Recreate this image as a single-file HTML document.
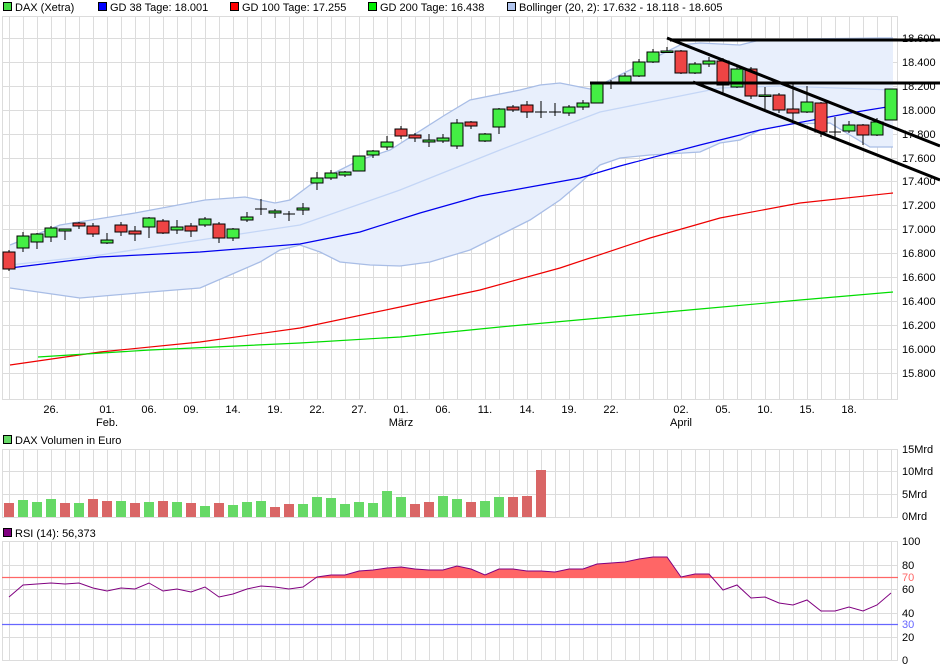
<!DOCTYPE html>
<html><head><meta charset="utf-8"><style>
html,body{margin:0;padding:0;background:#fff;width:940px;height:670px;overflow:hidden}
svg{display:block;font-family:"Liberation Sans",sans-serif;font-size:11px}
</style></head><body>
<svg width="940" height="670" viewBox="0 0 940 670" xmlns="http://www.w3.org/2000/svg">
<defs>
<pattern id="vg" x="9" y="0" width="14" height="10" patternUnits="userSpaceOnUse"><line x1="0.5" y1="0" x2="0.5" y2="10" stroke="#dcdcdc" stroke-width="1"/></pattern>
<clipPath id="above70"><rect x="0" y="530" width="900" height="47"/></clipPath>
</defs>
<!-- legend -->
<g>
<rect x="3.5" y="2.5" width="8" height="8" fill="#44dd44" stroke="#000"/><text x="15" y="11">DAX (Xetra)</text>
<rect x="98.5" y="2.5" width="8" height="8" fill="#0000ff" stroke="#000"/><text x="110" y="11">GD 38 Tage: 18.001</text>
<rect x="230.5" y="2.5" width="8" height="8" fill="#ff0000" stroke="#000"/><text x="242" y="11">GD 100 Tage: 17.255</text>
<rect x="368.5" y="2.5" width="8" height="8" fill="#00ee00" stroke="#000"/><text x="380" y="11">GD 200 Tage: 16.438</text>
<rect x="507.5" y="2.5" width="8" height="8" fill="#b0c4ee" stroke="#000"/><text x="519" y="11">Bollinger (20, 2): 17.632 - 18.118 - 18.605</text>
</g>
<!-- main panel grid -->
<rect x="2" y="16" width="896" height="384" fill="url(#vg)"/>
<g stroke="#dcdcdc" stroke-width="1">
<line x1="2" y1="16.5" x2="898" y2="16.5"/>
<line x1="2" y1="38.5" x2="898" y2="38.5"/><line x1="2" y1="62.5" x2="898" y2="62.5"/><line x1="2" y1="86.5" x2="898" y2="86.5"/><line x1="2" y1="110.5" x2="898" y2="110.5"/><line x1="2" y1="134.5" x2="898" y2="134.5"/><line x1="2" y1="158.5" x2="898" y2="158.5"/><line x1="2" y1="181.5" x2="898" y2="181.5"/><line x1="2" y1="205.5" x2="898" y2="205.5"/><line x1="2" y1="229.5" x2="898" y2="229.5"/><line x1="2" y1="253.5" x2="898" y2="253.5"/><line x1="2" y1="277.5" x2="898" y2="277.5"/><line x1="2" y1="301.5" x2="898" y2="301.5"/><line x1="2" y1="325.5" x2="898" y2="325.5"/><line x1="2" y1="349.5" x2="898" y2="349.5"/><line x1="2" y1="373.5" x2="898" y2="373.5"/>
<line x1="2" y1="399.5" x2="898" y2="399.5"/>
<line x1="2.5" y1="16" x2="2.5" y2="400"/><line x1="897.5" y1="16" x2="897.5" y2="400"/>
</g>
<!-- bollinger -->
<path d="M10,245 L60,225 L135,213 L205,200 L245,197 L275,203 L290,200 L310,185 L330,175 L360,160 L390,150 L445,115 L470,100 L520,90 L540,85 L560,83 L580,87 L590,89 L600,85 L620,75 L650,60 L680,45 L700,43 L740,45 L760,40 L800,39 L880,38 L893,38 L893,147 L870,147 L830,123 L790,124 L760,130 L740,140 L720,143 L700,152 L650,155 L620,158 L600,165 L580,183 L560,200 L530,220 L500,235 L470,250 L430,262 L400,266 L370,265 L340,262 L320,252 L300,245 L280,250 L260,262 L230,275 L200,288 L150,292 L80,298 L10,288 Z" fill="#e8effc" stroke="none"/>
<path d="M10,245 L60,225 L135,213 L205,200 L245,197 L275,203 L290,200 L310,185 L330,175 L360,160 L390,150 L445,115 L470,100 L520,90 L540,85 L560,83 L580,87 L590,89 L600,85 L620,75 L650,60 L680,45 L700,43 L740,45 L760,40 L800,39 L880,38 L893,38" fill="none" stroke="#a8bde6" stroke-width="1.3"/>
<path d="M10,288 L80,298 L150,292 L200,288 L230,275 L260,262 L280,250 L300,245 L320,252 L340,262 L370,265 L400,266 L430,262 L470,250 L500,235 L530,220 L560,200 L580,183 L600,165 L620,158 L650,155 L700,152 L720,143 L740,140 L760,130 L790,124 L830,123 L870,147 L893,147" fill="none" stroke="#a8bde6" stroke-width="1.3"/>
<path d="M10,265 L100,255 L200,240 L300,225 L400,190 L500,150 L600,112 L660,100 L720,88 L780,86 L893,90" fill="none" stroke="#c4d6f6" stroke-width="1.3"/>
<!-- moving averages -->
<path d="M10,268 L100,257 L200,252 L300,244 L360,232 L420,213 L480,196 L530,187 L580,178 L620,166 L700,145 L760,130 L850,113 L893,106" fill="none" stroke="#0000ee" stroke-width="1.2"/>
<path d="M10,365 L100,352 L200,342 L300,328 L400,307 L480,290 L560,268 L650,238 L720,218 L800,203 L893,193" fill="none" stroke="#ee0000" stroke-width="1.2"/>
<path d="M38,357 L150,350 L300,343 L400,337 L500,327 L600,318 L700,309 L800,300 L893,292" fill="none" stroke="#00dd00" stroke-width="1.2"/>
<!-- candles -->
<g stroke="#000" stroke-width="1">
<line x1="9" y1="250" x2="9" y2="271"/><rect x="3" y="252" width="12" height="17" fill="#ee4444"/>
<line x1="23" y1="232" x2="23" y2="252"/><rect x="17" y="236" width="12" height="12" fill="#44ee44"/>
<line x1="37" y1="233" x2="37" y2="249"/><rect x="31" y="234" width="12" height="8" fill="#44ee44"/>
<line x1="51" y1="226" x2="51" y2="242"/><rect x="45" y="228" width="12" height="9" fill="#44ee44"/>
<line x1="65" y1="229" x2="65" y2="240"/><rect x="59" y="229" width="12" height="2" fill="#44ee44"/>
<line x1="79" y1="222" x2="79" y2="229"/><rect x="73" y="223" width="12" height="3" fill="#ee4444"/>
<line x1="93" y1="223" x2="93" y2="237"/><rect x="87" y="226" width="12" height="8" fill="#ee4444"/>
<line x1="107" y1="233" x2="107" y2="244"/><rect x="101" y="240" width="12" height="3" fill="#44ee44"/>
<line x1="121" y1="222" x2="121" y2="236"/><rect x="115" y="225" width="12" height="7" fill="#ee4444"/>
<line x1="135" y1="226" x2="135" y2="241"/><rect x="129" y="231" width="12" height="3" fill="#ee4444"/>
<line x1="149" y1="217" x2="149" y2="238"/><rect x="143" y="218" width="12" height="9" fill="#44ee44"/>
<line x1="163" y1="219" x2="163" y2="234"/><rect x="157" y="221" width="12" height="12" fill="#ee4444"/>
<line x1="177" y1="220" x2="177" y2="234"/><rect x="171" y="227" width="12" height="3" fill="#44ee44"/>
<line x1="191" y1="223" x2="191" y2="237"/><rect x="185" y="226" width="12" height="5" fill="#ee4444"/>
<line x1="205" y1="217" x2="205" y2="227"/><rect x="199" y="219" width="12" height="6" fill="#44ee44"/>
<line x1="219" y1="222" x2="219" y2="243"/><rect x="213" y="224" width="12" height="14" fill="#ee4444"/>
<line x1="233" y1="228" x2="233" y2="241"/><rect x="227" y="229" width="12" height="9" fill="#44ee44"/>
<line x1="247" y1="212" x2="247" y2="222"/><rect x="241" y="217" width="12" height="3" fill="#44ee44"/>
<line x1="261" y1="199" x2="261" y2="215"/><line x1="255" y1="209" x2="267" y2="209"/>
<line x1="275" y1="209" x2="275" y2="218"/><rect x="269" y="211" width="12" height="2" fill="#44ee44"/>
<line x1="289" y1="211" x2="289" y2="221"/><line x1="283" y1="214" x2="295" y2="214"/>
<line x1="303" y1="203" x2="303" y2="215"/><rect x="297" y="208" width="12" height="2" fill="#44ee44"/>
<line x1="317" y1="172" x2="317" y2="190"/><rect x="311" y="178" width="12" height="5" fill="#44ee44"/>
<line x1="331" y1="170" x2="331" y2="180"/><rect x="325" y="173" width="12" height="5" fill="#44ee44"/>
<line x1="345" y1="171" x2="345" y2="177"/><rect x="339" y="172" width="12" height="3" fill="#44ee44"/>
<line x1="359" y1="156" x2="359" y2="171"/><rect x="353" y="156" width="12" height="15" fill="#44ee44"/>
<line x1="373" y1="150" x2="373" y2="158"/><rect x="367" y="151" width="12" height="4" fill="#44ee44"/>
<line x1="387" y1="136" x2="387" y2="150"/><rect x="381" y="142" width="12" height="5" fill="#44ee44"/>
<line x1="401" y1="126" x2="401" y2="139"/><rect x="395" y="129" width="12" height="7" fill="#ee4444"/>
<line x1="415" y1="133" x2="415" y2="142"/><rect x="409" y="135" width="12" height="3" fill="#ee4444"/>
<line x1="429" y1="134" x2="429" y2="147"/><rect x="423" y="140" width="12" height="2" fill="#44ee44"/>
<line x1="443" y1="134" x2="443" y2="143"/><rect x="437" y="138" width="12" height="3" fill="#44ee44"/>
<line x1="457" y1="119" x2="457" y2="149"/><rect x="451" y="123" width="12" height="23" fill="#44ee44"/>
<line x1="471" y1="121" x2="471" y2="129"/><rect x="465" y="122" width="12" height="4" fill="#ee4444"/>
<line x1="485" y1="133" x2="485" y2="142"/><rect x="479" y="134" width="12" height="7" fill="#44ee44"/>
<line x1="499" y1="108" x2="499" y2="134"/><rect x="493" y="109" width="12" height="18" fill="#44ee44"/>
<line x1="513" y1="105" x2="513" y2="112"/><rect x="507" y="107" width="12" height="3" fill="#ee4444"/>
<line x1="527" y1="101" x2="527" y2="118"/><rect x="521" y="105" width="12" height="7" fill="#ee4444"/>
<line x1="541" y1="101" x2="541" y2="118"/><line x1="535" y1="112" x2="547" y2="112"/>
<line x1="555" y1="103" x2="555" y2="116"/><line x1="549" y1="112" x2="561" y2="112"/>
<line x1="569" y1="105" x2="569" y2="116"/><rect x="563" y="107" width="12" height="6" fill="#44ee44"/>
<line x1="583" y1="100" x2="583" y2="110"/><rect x="577" y="103" width="12" height="4" fill="#44ee44"/>
<line x1="597" y1="83" x2="597" y2="103"/><rect x="591" y="84" width="12" height="19" fill="#44ee44"/>
<line x1="611" y1="80" x2="611" y2="89"/><rect x="605" y="83" width="12" height="1" fill="#44ee44"/>
<line x1="625" y1="73" x2="625" y2="84"/><rect x="619" y="76" width="12" height="7" fill="#44ee44"/>
<line x1="639" y1="59" x2="639" y2="77"/><rect x="633" y="62" width="12" height="14" fill="#44ee44"/>
<line x1="653" y1="49" x2="653" y2="63"/><rect x="647" y="52" width="12" height="10" fill="#44ee44"/>
<line x1="667" y1="47" x2="667" y2="53"/><rect x="661" y="51" width="12" height="1.5" fill="#44ee44"/>
<line x1="681" y1="50" x2="681" y2="74"/><rect x="675" y="51" width="12" height="22" fill="#ee4444"/>
<line x1="695" y1="62" x2="695" y2="74"/><rect x="689" y="64" width="12" height="9" fill="#44ee44"/>
<line x1="709" y1="57" x2="709" y2="67"/><rect x="703" y="61" width="12" height="3" fill="#44ee44"/>
<line x1="723" y1="58" x2="723" y2="93"/><rect x="717" y="61" width="12" height="24" fill="#ee4444"/>
<line x1="737" y1="66" x2="737" y2="88"/><rect x="731" y="69" width="12" height="18" fill="#44ee44"/>
<line x1="751" y1="67" x2="751" y2="99"/><rect x="745" y="69" width="12" height="27" fill="#ee4444"/>
<line x1="765" y1="87" x2="765" y2="109"/><rect x="759" y="95" width="12" height="1.5" fill="#44ee44"/>
<line x1="779" y1="93" x2="779" y2="113"/><rect x="773" y="95" width="12" height="15" fill="#ee4444"/>
<line x1="793" y1="83" x2="793" y2="120"/><rect x="787" y="109" width="12" height="4" fill="#ee4444"/>
<line x1="807" y1="86" x2="807" y2="113"/><rect x="801" y="102" width="12" height="10" fill="#44ee44"/>
<line x1="821" y1="102" x2="821" y2="137"/><rect x="815" y="103" width="12" height="29" fill="#ee4444"/>
<line x1="835" y1="117" x2="835" y2="137"/><line x1="829" y1="132" x2="841" y2="132"/>
<line x1="849" y1="121" x2="849" y2="133"/><rect x="843" y="125" width="12" height="6" fill="#44ee44"/>
<line x1="863" y1="124" x2="863" y2="145"/><rect x="857" y="125" width="12" height="10" fill="#ee4444"/>
<line x1="877" y1="118" x2="877" y2="136"/><rect x="871" y="122" width="12" height="13" fill="#44ee44"/>
<rect x="885" y="89" width="12" height="31" fill="#44ee44"/>
</g>
<!-- trend lines -->
<g stroke="#000" stroke-width="3" stroke-linecap="butt">
<line x1="670" y1="40" x2="940" y2="40"/>
<line x1="590" y1="83" x2="940" y2="83"/>
<line x1="667" y1="38" x2="940" y2="146"/>
<line x1="693" y1="82" x2="940" y2="180"/>
</g>
<!-- y labels -->
<g fill="#000">
<text x="902" y="42">18.600</text><text x="902" y="66">18.400</text><text x="902" y="90">18.200</text><text x="902" y="114">18.000</text><text x="902" y="138">17.800</text><text x="902" y="162">17.600</text><text x="902" y="185">17.400</text><text x="902" y="209">17.200</text><text x="902" y="233">17.000</text><text x="902" y="257">16.800</text><text x="902" y="281">16.600</text><text x="902" y="305">16.400</text><text x="902" y="329">16.200</text><text x="902" y="353">16.000</text><text x="902" y="377">15.800</text>
</g>
<!-- x labels -->
<g text-anchor="middle">
<text x="51" y="413">26.</text><text x="107" y="413">01.</text><text x="149" y="413">06.</text><text x="191" y="413">09.</text><text x="233" y="413">14.</text><text x="275" y="413">19.</text><text x="317" y="413">22.</text><text x="359" y="413">27.</text><text x="401" y="413">01.</text><text x="443" y="413">06.</text><text x="485" y="413">11.</text><text x="527" y="413">14.</text><text x="569" y="413">19.</text><text x="611" y="413">22.</text><text x="681" y="413">02.</text><text x="723" y="413">05.</text><text x="765" y="413">10.</text><text x="807" y="413">15.</text><text x="849" y="413">18.</text>
<text x="107" y="426">Feb.</text><text x="401" y="426">März</text><text x="681" y="426">April</text>
</g>
<!-- volume -->
<rect x="3.5" y="435.5" width="8" height="8" fill="#66d966" stroke="#000"/><text x="15" y="444">DAX Volumen in Euro</text>
<rect x="2" y="449" width="896" height="68" fill="url(#vg)"/>
<g stroke="#dcdcdc"><line x1="2" y1="449.5" x2="898" y2="449.5"/><line x1="2" y1="471.5" x2="898" y2="471.5"/><line x1="2" y1="494.5" x2="898" y2="494.5"/><line x1="2" y1="517.5" x2="898" y2="517.5"/><line x1="2.5" y1="449" x2="2.5" y2="517"/><line x1="897.5" y1="449" x2="897.5" y2="517"/></g>
<g>
<rect x="4" y="503" width="10" height="14" fill="#d96666"/><rect x="18" y="500" width="10" height="17" fill="#66d966"/><rect x="32" y="502" width="10" height="15" fill="#66d966"/><rect x="46" y="499" width="10" height="18" fill="#66d966"/><rect x="60" y="503" width="10" height="14" fill="#d96666"/><rect x="74" y="503" width="10" height="14" fill="#66d966"/><rect x="88" y="499" width="10" height="18" fill="#d96666"/><rect x="102" y="501" width="10" height="16" fill="#d96666"/><rect x="116" y="501" width="10" height="16" fill="#66d966"/><rect x="130" y="503" width="10" height="14" fill="#d96666"/><rect x="144" y="502" width="10" height="15" fill="#66d966"/><rect x="158" y="501" width="10" height="16" fill="#d96666"/><rect x="172" y="502" width="10" height="15" fill="#66d966"/><rect x="186" y="503" width="10" height="14" fill="#d96666"/><rect x="200" y="506" width="10" height="11" fill="#66d966"/><rect x="214" y="503" width="10" height="14" fill="#d96666"/><rect x="228" y="505" width="10" height="12" fill="#66d966"/><rect x="242" y="502" width="10" height="15" fill="#66d966"/><rect x="256" y="501" width="10" height="16" fill="#66d966"/><rect x="270" y="507" width="10" height="10" fill="#d96666"/><rect x="284" y="504" width="10" height="13" fill="#d96666"/><rect x="298" y="504" width="10" height="13" fill="#66d966"/><rect x="312" y="497" width="10" height="20" fill="#66d966"/><rect x="326" y="498" width="10" height="19" fill="#66d966"/><rect x="340" y="504" width="10" height="13" fill="#66d966"/><rect x="354" y="502" width="10" height="15" fill="#66d966"/><rect x="368" y="503" width="10" height="14" fill="#66d966"/><rect x="382" y="491" width="10" height="26" fill="#66d966"/><rect x="396" y="497" width="10" height="20" fill="#66d966"/><rect x="410" y="504" width="10" height="13" fill="#d96666"/><rect x="424" y="502" width="10" height="15" fill="#d96666"/><rect x="438" y="496" width="10" height="21" fill="#66d966"/><rect x="452" y="499" width="10" height="18" fill="#66d966"/><rect x="466" y="502" width="10" height="15" fill="#d96666"/><rect x="480" y="501" width="10" height="16" fill="#66d966"/><rect x="494" y="497" width="10" height="20" fill="#66d966"/><rect x="508" y="497" width="10" height="20" fill="#d96666"/><rect x="522" y="496" width="10" height="21" fill="#d96666"/><rect x="536" y="470" width="10" height="47" fill="#d96666"/>
</g>
<g><text x="902" y="453">15Mrd</text><text x="902" y="475">10Mrd</text><text x="902" y="498">5Mrd</text><text x="902" y="520">0Mrd</text></g>
<!-- RSI -->
<rect x="3.5" y="528.5" width="8" height="8" fill="#800080" stroke="#000"/><text x="15" y="537">RSI (14): 56,373</text>
<rect x="2" y="541" width="896" height="120" fill="url(#vg)"/>
<g stroke="#dcdcdc"><line x1="2" y1="541.5" x2="898" y2="541.5"/><line x1="2" y1="565.5" x2="898" y2="565.5"/><line x1="2" y1="589.5" x2="898" y2="589.5"/><line x1="2" y1="613.5" x2="898" y2="613.5"/><line x1="2" y1="637.5" x2="898" y2="637.5"/><line x1="2" y1="660.5" x2="898" y2="660.5"/><line x1="2.5" y1="541" x2="2.5" y2="661"/><line x1="897.5" y1="541" x2="897.5" y2="661"/></g>
<path clip-path="url(#above70)" d="M9,597 L23,585 L37,584 L51,583 L65,584 L79,583 L93,588 L107,591 L121,588 L135,589 L149,583 L163,591 L177,589 L191,592 L205,587 L219,597 L233,594 L247,589 L261,586 L275,587 L289,589 L303,587 L317,577 L331,575 L345,575 L359,571 L373,570 L387,568 L401,567 L415,569 L429,570 L443,570 L457,566 L471,569 L485,575 L499,569 L513,569 L527,571 L541,571 L555,572 L569,569 L583,569 L597,564 L611,563 L625,562 L639,559 L653,557 L667,557 L681,577 L695,574 L709,574 L723,590 L737,585 L751,598 L765,597 L779,603 L793,605 L807,600 L821,611 L835,611 L849,607 L863,611 L877,605 L891,593 L891,577 L9,577 Z" fill="#ff6666"/>
<line x1="2" y1="577.5" x2="898" y2="577.5" stroke="#ff6666" stroke-width="1.2"/>
<line x1="2" y1="624.5" x2="898" y2="624.5" stroke="#6666ff" stroke-width="1.2"/>
<path d="M9,597 L23,585 L37,584 L51,583 L65,584 L79,583 L93,588 L107,591 L121,588 L135,589 L149,583 L163,591 L177,589 L191,592 L205,587 L219,597 L233,594 L247,589 L261,586 L275,587 L289,589 L303,587 L317,577 L331,575 L345,575 L359,571 L373,570 L387,568 L401,567 L415,569 L429,570 L443,570 L457,566 L471,569 L485,575 L499,569 L513,569 L527,571 L541,571 L555,572 L569,569 L583,569 L597,564 L611,563 L625,562 L639,559 L653,557 L667,557 L681,577 L695,574 L709,574 L723,590 L737,585 L751,598 L765,597 L779,603 L793,605 L807,600 L821,611 L835,611 L849,607 L863,611 L877,605 L891,593" fill="none" stroke="#800080" stroke-width="1"/>
<g><text x="902" y="545">100</text><text x="902" y="569">80</text><text x="902" y="581" fill="#ff6666">70</text><text x="902" y="593">60</text><text x="902" y="617">40</text><text x="902" y="628" fill="#6666ff">30</text><text x="902" y="641">20</text><text x="902" y="664">0</text></g>
</svg>
</body></html>
